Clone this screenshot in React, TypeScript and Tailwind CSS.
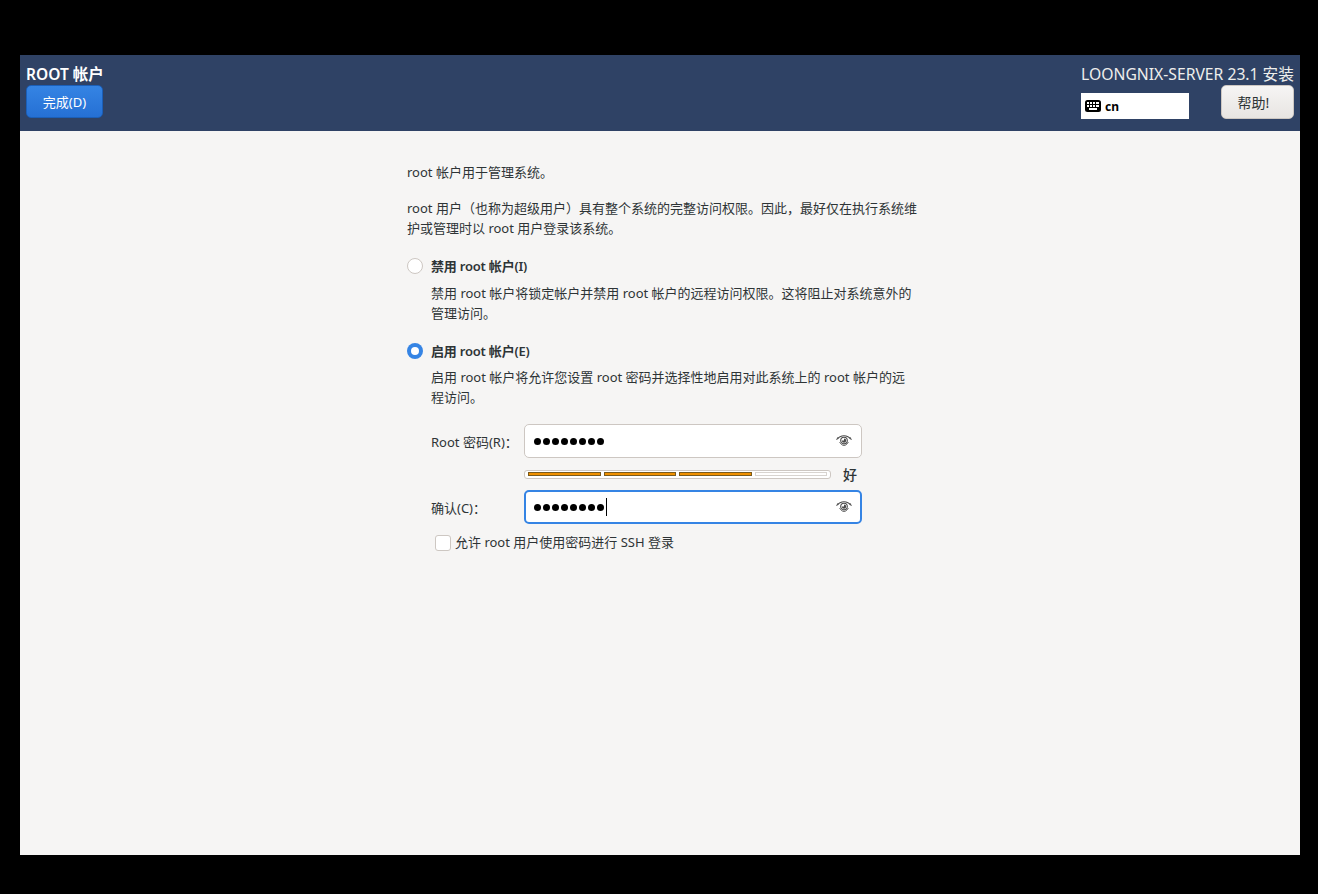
import React from 'react';

const FONT = "font-['Noto_Sans','Noto_Sans_CJK_SC',sans-serif]";

const KeyboardIcon = () => (
  <svg width="16" height="12" viewBox="0 0 16 12" aria-hidden="true">
    <rect x="0" y="0" width="16" height="12" rx="2.5" fill="#000" />
    <g fill="#fff">
      <rect x="2" y="2" width="2" height="2" />
      <rect x="5" y="2" width="2" height="2" />
      <rect x="8" y="2" width="2" height="2" />
      <rect x="11" y="2" width="3" height="2" />
      <rect x="2" y="5" width="2" height="2" />
      <rect x="5" y="5" width="2" height="2" />
      <rect x="8" y="5" width="2" height="2" />
      <rect x="11" y="5" width="3" height="2" />
      <rect x="4" y="8" width="8" height="2" />
    </g>
  </svg>
);

const PeekIcon = () => (
  <svg width="16" height="14" viewBox="0 0 16 14" fill="none" stroke="#4a4a4a" aria-hidden="true">
    <path d="M0.5 5.6C3 2.8 5.4 1.8 8 1.8s5 1 7.5 3.8" strokeWidth="1.1" />
    <path d="M1.5 3.4L2.6 4.6M14.5 3.4L13.4 4.6" strokeWidth="0.9" />
    <path d="M3.6 8.2C5 10.4 6.4 11.4 8 11.4s3-1 4.4-3.2" strokeWidth="0.9" />
    <circle cx="8" cy="6.6" r="3.3" strokeWidth="1.1" />
    <path d="M8 6.6V4.4A2.2 2.2 0 1 1 5.8 6.6Z" fill="#4a4a4a" stroke="none" />
  </svg>
);

const Dots = ({ caret }: { caret?: boolean }) => (
  <div className="flex items-center gap-[2px]">
    {[0, 1, 2, 3, 4, 5, 6, 7].map((i) => (
      <span key={i} className="block w-[7px] h-[7px] rounded-full bg-black" />
    ))}
    {caret && <span className="block w-px h-[18px] bg-black" />}
  </div>
);

const Segment = ({ on }: { on: boolean }) => (
  <span
    className={
      on
        ? 'block flex-1 h-[4px] bg-[#f09000] border border-[#7a5a1c]'
        : 'block flex-1 h-[4px] bg-white border border-[#d8d4d0]'
    }
  />
);

const Field = ({ label, focused, caret }: { label: string; focused?: boolean; caret?: boolean }) => (
  <div className="flex items-center">
    <span className="w-[93px] pt-[4px] text-[13px] text-[#2e3436]">{label}</span>
    <div
      className={
        focused
          ? 'w-[338px] h-[34px] px-2 flex items-center justify-between bg-white rounded-[5px] border-2 border-[#3584e4]'
          : 'w-[338px] h-[34px] px-[9px] flex items-center justify-between bg-white rounded-[5px] border border-[#cdc7c2]'
      }
    >
      <Dots caret={caret} />
      <PeekIcon />
    </div>
  </div>
);

const App: React.FC = () => {
  return (
    <div className={`w-[1318px] h-[894px] bg-black pt-[55px] px-[20px] overflow-hidden ${FONT}`}>
      <div className="w-[1280px] h-[800px] bg-[#f6f5f4] flex flex-col">
        <header className="h-[76px] bg-[#2f4265] flex justify-between px-[6px] pt-[8px] shrink-0">
          <div className="w-[77px]">
            <h1 className="text-[15.5px] leading-[22px] font-semibold text-white whitespace-nowrap">ROOT 帐户</h1>
            <button className="w-[77px] h-[33px] pt-[3px] rounded-[5px] border border-[#1b5fb8] bg-gradient-to-b from-[#3584e4] to-[#2570d4] text-[13px] text-white">
              完成(D)
            </button>
          </div>
          <div className="w-[213px]">
            <div className="text-[15.7px] leading-[22px] text-[#eeeeec] whitespace-nowrap text-right">
              LOONGNIX-SERVER 23.1 安装
            </div>
            <div className="flex justify-between items-start">
              <div className="mt-[8px] w-[108px] h-[26px] bg-white flex items-center gap-[4px] pl-[4px]">
                <KeyboardIcon />
                <span className="pt-[2px] text-[12px] font-bold text-black">cn</span>
              </div>
              <button className="w-[73px] h-[34px] pr-[8px] rounded-[5px] border border-[#cdc7c2] bg-gradient-to-b from-[#f6f5f4] to-[#e8e5e2] text-[14px] text-[#2e3436]">
                帮助!
              </button>
            </div>
          </div>
        </header>

        <main className="pl-[387px] pt-[31px] text-[13px] text-[#2e3436]">
          <p className="leading-[20px]">root 帐户用于管理系统。</p>
          <p className="leading-[20px] mt-[16px]">
            root 用户（也称为超级用户）具有整个系统的完整访问权限。因此，最好仅在执行系统维
            <br />
            护或管理时以 root 用户登录该系统。
          </p>

          <div className="flex items-center mt-[18px] h-[20px]">
            <span className="block w-[16px] h-[16px] rounded-full bg-white border border-[#cdc7c2]" />
            <span className="ml-[8px] mt-[2px] font-semibold tracking-[-0.2px]">禁用 root 帐户(I)</span>
          </div>
          <p className="leading-[20px] ml-[24px] mt-[7px]">
            禁用 root 帐户将锁定帐户并禁用 root 帐户的远程访问权限。这将阻止对系统意外的
            <br />
            管理访问。
          </p>

          <div className="flex items-center mt-[18px] h-[20px]">
            <span className="flex items-center justify-center w-[16px] h-[16px] rounded-full bg-[#3584e4]">
              <span className="block w-[8px] h-[8px] rounded-full bg-white" />
            </span>
            <span className="ml-[8px] mt-[2px] font-semibold tracking-[-0.2px]">启用 root 帐户(E)</span>
          </div>
          <p className="leading-[20px] ml-[24px] mt-[6px]">
            启用 root 帐户将允许您设置 root 密码并选择性地启用对此系统上的 root 帐户的远
            <br />
            程访问。
          </p>

          <div className="ml-[24px] mt-[17px]">
            <Field label="Root 密码(R)：" />
            <div className="flex items-center ml-[93px] h-[32px]">
              <div className="w-[307px] h-[9px] flex items-center gap-[3px] px-[3px] bg-white rounded-[3px] border border-[#cdc7c2]">
                <Segment on />
                <Segment on />
                <Segment on />
                <Segment on={false} />
              </div>
              <span className="ml-[12px] pt-[1px] text-[14px] font-medium">好</span>
            </div>
            <Field label="确认(C)：" focused caret />
            <div className="flex items-center ml-[4px] mt-[9px]">
              <span className="block w-[16px] h-[16px] rounded-[3px] bg-white border border-[#cdc7c2]" />
              <span className="ml-[4px]">允许 root 用户使用密码进行 SSH 登录</span>
            </div>
          </div>
        </main>
      </div>
    </div>
  );
};

export default App;
